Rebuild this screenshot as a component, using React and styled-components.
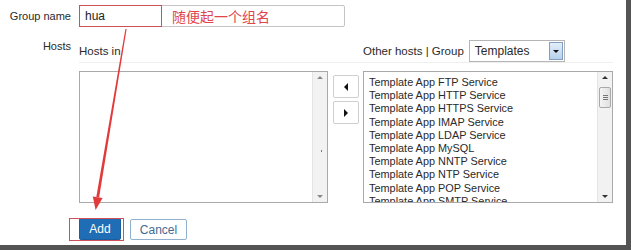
import React from 'react';
import styled, { createGlobalStyle } from 'styled-components';

const GlobalStyle = createGlobalStyle`
  body {
    margin: 0;
    background: #fff;
    font-family: 'Liberation Sans', Arial, sans-serif;
  }
`;

const templates = [
  'Template App FTP Service',
  'Template App HTTP Service',
  'Template App HTTPS Service',
  'Template App IMAP Service',
  'Template App LDAP Service',
  'Template App MySQL',
  'Template App NNTP Service',
  'Template App NTP Service',
  'Template App POP Service',
  'Template App SMTP Service',
];

const Frame = styled.div`
  position: relative;
  width: 631px;
  height: 250px;
  box-sizing: border-box;
  border-right: 5px solid #545454;
  border-bottom: 5px solid #545454;
  overflow: hidden;
  color: #2a2a2a;
  font-size: 11px;
`;

const Row = styled.div`
  display: grid;
  grid-template-columns: 71px 1fr;
  column-gap: 8px;
  align-items: ${(p) => (p.top ? 'start' : 'center')};
  margin-top: ${(p) => p.gap}px;
`;

const Label = styled.div`
  text-align: right;
  line-height: 13px;
  white-space: nowrap;
`;

const NameInput = styled.div`
  position: relative;
  display: flex;
  align-items: center;
  width: 266px;
  height: 22px;
  box-sizing: border-box;
  border: 1px solid #c4c4c4;
  border-radius: 2px;
  padding-left: 5px;
  font-size: 12px;
`;

const Value = styled.span`
  width: 87px;
  color: #222;
`;

const Note = styled.span`
  color: #e0454c;
  font-size: 14px;
  font-family: 'Noto Sans CJK SC', sans-serif;
`;

const Mark = styled.div`
  position: absolute;
  border: 1px solid #d0505a;
  pointer-events: none;
  left: ${(p) => p.l}px;
  top: ${(p) => p.t}px;
  width: ${(p) => p.w}px;
  height: ${(p) => p.h}px;
`;

const Twin = styled.div`
  display: grid;
  grid-template-columns: 249px 35px 250px;
`;

const Head = styled.div`
  display: flex;
  align-items: center;
  gap: 5px;
  height: 22px;
  border-bottom: 1px solid #eeeeee;
  margin-bottom: 8px;
  font-size: 11.5px;
`;

const Select = styled.div`
  display: flex;
  align-items: center;
  justify-content: space-between;
  width: 96px;
  height: 22px;
  box-sizing: border-box;
  border: 1px solid #b5b5b5;
  padding: 0 1px 0 5px;
  font-size: 12px;
`;

const DropBtn = styled.div`
  display: flex;
  align-items: center;
  justify-content: center;
  width: 14px;
  height: 18px;
  box-sizing: border-box;
  border: 1px solid #7f9ec0;
  background: linear-gradient(#e3eefa, #b7d1ec);
`;

const Tri = styled.span`
  width: 0;
  height: 0;
  border-style: solid;
  border-color: transparent;
  ${(p) =>
    p.dir === 'down'
      ? `border-width: ${p.s}px ${p.s}px 0 ${p.s}px; border-top-color: ${p.c};`
      : p.dir === 'up'
      ? `border-width: 0 ${p.s}px ${p.s}px ${p.s}px; border-bottom-color: ${p.c};`
      : p.dir === 'left'
      ? `border-width: ${p.s + 1}px ${p.s + 1}px ${p.s + 1}px 0; border-right-color: ${p.c};`
      : `border-width: ${p.s + 1}px 0 ${p.s + 1}px ${p.s + 1}px; border-left-color: ${p.c};`}
`;

const ListBox = styled.div`
  display: flex;
  height: 132px;
  box-sizing: border-box;
  border: 1px solid #a9a9a9;
  background: #fff;
`;

const Items = styled.div`
  flex: 1;
  overflow: hidden;
  padding: 4px 0 0 5px;
  font-size: 10.9px;
  line-height: 13.2px;
  white-space: nowrap;
`;

const Track = styled.div`
  position: relative;
  display: flex;
  flex-direction: column;
  align-items: center;
  justify-content: space-between;
  width: 15px;
  padding: 4px 0;
  box-sizing: border-box;
  background: #f2f2f2;
  border-left: 1px solid #e4e4e4;
`;

const Thumb = styled.div`
  position: absolute;
  top: 15px;
  left: 1px;
  width: 12px;
  height: 21px;
  box-sizing: border-box;
  border: 1px solid #a9a9a9;
  border-radius: 2px;
  background: linear-gradient(90deg, #f4f4f4, #e0e0e0);
  display: flex;
  flex-direction: column;
  align-items: center;
  justify-content: center;
  gap: 1px;

  span {
    width: 5px;
    height: 1px;
    background: #777;
  }
`;

const Dot = styled.div`
  position: absolute;
  top: 78px;
  left: 8px;
  width: 1px;
  height: 2px;
  background: #777;
`;

const Mover = styled.div`
  display: flex;
  flex-direction: column;
  justify-content: center;
  gap: 3px;
  padding: 4px 0 0 5px;
`;

const MoveBtn = styled.div`
  display: flex;
  align-items: center;
  justify-content: center;
  width: 26px;
  height: 23px;
  box-sizing: border-box;
  border: 1px solid #cfcfcf;
  border-radius: 2px;
  background: #fff;
`;

const Actions = styled.div`
  display: flex;
  gap: 9px;
  align-items: flex-start;
`;

const Marked = styled.div`
  position: relative;
`;

const Btn = styled.div`
  display: flex;
  align-items: center;
  justify-content: center;
  box-sizing: border-box;
  font-size: 12px;
  height: ${(p) => (p.primary ? 22 : 21)}px;
  width: ${(p) => (p.primary ? 42 : 57)}px;
  margin-top: ${(p) => (p.primary ? 0 : 1)}px;
  border-radius: 2px;
  background: ${(p) => (p.primary ? '#1f6db5' : '#fff')};
  color: ${(p) => (p.primary ? '#fff' : '#3f6a93')};
  border: 1px solid ${(p) => (p.primary ? '#1b5f9e' : '#8fb0cf')};
`;

const Overlay = styled.svg`
  position: absolute;
  left: 0;
  top: 0;
  pointer-events: none;
`;

const Scroll = ({ thumb }) => (
  <Track>
    <Tri dir="up" s={3} c={thumb ? '#333' : '#888'} />
    {thumb ? (
      <Thumb>
        <span />
        <span />
        <span />
      </Thumb>
    ) : (
      <Dot />
    )}
    <Tri dir="down" s={3} c={thumb ? '#333' : '#888'} />
  </Track>
);

export default function App() {
  return (
    <>
      <GlobalStyle />
      <Frame>
        <Row gap={5}>
          <Label>Group name</Label>
          <NameInput>
            <Value>hua</Value>
            <Note>随便起一个组名</Note>
            <Mark l={-1} t={-1} w={81} h={20} />
          </NameInput>
        </Row>
        <Row gap={13} top>
          <Label>Hosts</Label>
          <Twin>
            <div>
              <Head>Hosts in</Head>
              <ListBox>
                <Items />
                <Scroll />
              </ListBox>
            </div>
            <div>
              <Head />
              <Mover>
                <MoveBtn>
                  <Tri dir="left" s={3} c="#111" />
                </MoveBtn>
                <MoveBtn>
                  <Tri dir="right" s={3} c="#111" />
                </MoveBtn>
              </Mover>
            </div>
            <div>
              <Head>
                Other hosts | Group
                <Select>
                  Templates
                  <DropBtn>
                    <Tri dir="down" s={3} c="#111" />
                  </DropBtn>
                </Select>
              </Head>
              <ListBox>
                <Items>
                  {templates.map((t) => (
                    <div key={t}>{t}</div>
                  ))}
                </Items>
                <Scroll thumb />
              </ListBox>
            </div>
          </Twin>
        </Row>
        <Row gap={15}>
          <span />
          <Actions>
            <Marked>
              <Btn primary>Add</Btn>
              <Mark l={-10} t={0} w={53} h={21} />
            </Marked>
            <Btn>Cancel</Btn>
          </Actions>
        </Row>
        <Overlay width="631" height="250">
          <polygon
            points="126.6,29 125.4,29 96.3,197 99.1,197.4"
            fill="#e23a3a"
          />
          <polygon points="102.6,198 92.8,196.4 95.6,210" fill="#e23a3a" />
        </Overlay>
      </Frame>
    </>
  );
}
